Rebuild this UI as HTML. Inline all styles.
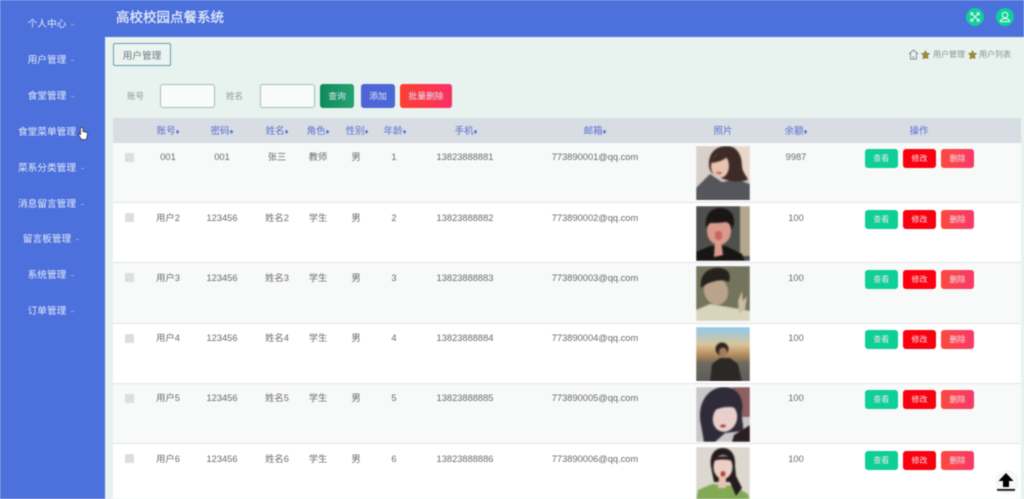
<!DOCTYPE html>
<html lang="zh"><head><meta charset="utf-8"><title>高校校园点餐系统</title>
<style>
*{box-sizing:border-box;margin:0;padding:0}
html,body{width:1024px;height:499px;overflow:hidden}
body{position:relative;background:#e8f2ee;font-family:"Liberation Sans","Noto Sans CJK SC",sans-serif;font-size:9.3px;color:#666}
#w{position:absolute;left:0;top:0;width:1024px;height:499px;overflow:hidden;filter:blur(.45px)}
.a{position:absolute;white-space:nowrap}
.side{left:0;top:0;width:105px;height:499px;background:#4c70dc}
.top{left:105px;top:0;width:919px;height:37px;background:#4c70dc}
.m{left:0;width:94px;text-align:center;color:#e4ebfb;font-size:9.700px;line-height:12px;transform:translateY(2px)}
.m i{position:absolute;width:3px;height:1px;background:#8ea6ea;top:5px}
.title{left:116px;top:9px;color:#e4eafa;font-size:13.500px;line-height:18px;font-weight:400;-webkit-text-stroke:.3px #e4eafa}
.circ{width:18px;height:18px;border-radius:50%;background:#0fcf9a;top:7.500px}
.tag{left:113px;top:43px;width:58px;height:23px;border:1.500px solid #6d9ca8;border-radius:2px;text-align:center;font-size:9.700px;line-height:25px;color:#6d7a80;background:#ebf4f0;overflow:hidden}
.lb{font-size:8.500px;color:#8c9aa0;top:91px;line-height:11px}
.ip{top:84px;width:55px;height:24px;background:#f8fbfa;border:1px solid #a9bcb8;border-radius:3px}
.bt{top:84px;height:24px;border-radius:3px;color:#dce8f5;font-size:8.800px;line-height:24px;text-align:center}
.th{left:113px;top:118px;width:908px;height:25px;background:#d7dde3}
.h{top:126px;color:#5b6fd2;font-size:9.500px;line-height:12px;transform:translateX(-50%)}
.h b{font-weight:400;font-size:7.500px;vertical-align:0}
.tb{left:113px;width:908px;height:60px;border-bottom:1px solid #e3e5e7}
.odd{background:#f8f9f9}.even{background:#fff}
.d{line-height:12px;transform:translateX(-50%);color:#6a6a6a}
.ck{left:125px;width:9px;height:9px;background:#dcdfe2}
.b{width:33px;height:19px;border-radius:3px;color:#f3e6e6;font-size:8px;line-height:19px;text-align:center}
.b1{left:865px;background:#0dcf97;width:32.500px}.b2{left:903px;background:#fb0010}.b3{left:941px;background:linear-gradient(90deg,#fb4a40,#f83a68)}
.p{left:696px;width:54px;height:54.500px;overflow:hidden}
.p svg{display:block;width:54px;height:55px;filter:blur(.9px)}
</style></head><body><div id="w">
<div class="a side"></div>
<div class="a top"></div>
<div class="a m" style="top:17px">个人中心<i style="left:71px"></i></div>
<div class="a m" style="top:53px">用户管理<i style="left:71px"></i></div>
<div class="a m" style="top:89px">食堂管理<i style="left:71px"></i></div>
<div class="a m" style="top:125px">食堂菜单管理</div>
<div class="a m" style="top:161px">菜系分类管理<i style="left:81px"></i></div>
<div class="a m" style="top:197px">消息留言管理<i style="left:81px"></i></div>
<div class="a m" style="top:232px">留言板管理<i style="left:76px"></i></div>
<div class="a m" style="top:268px">系统管理<i style="left:71px"></i></div>
<div class="a m" style="top:304px">订单管理<i style="left:71px"></i></div>
<svg class="a" style="left:78px;top:126px" width="10" height="15" viewBox="0 0 10 15"><path d="M2.500 1.500v7L1 7.500.5 9l3 4.500h5L9.500 8V6.500L5 5.500V1.500z" fill="#fff" stroke="#333" stroke-width=".8"/></svg>

<div class="a title">高校校园点餐系统</div>
<div class="a circ" style="left:966px"><svg width="18" height="18" viewBox="0 0 18 18" fill="none" stroke="#e4faf3" stroke-width="1.200"><path d="M6 6l6 6M12 6l-6 6M5 7.500V5h2.500M10.500 5H13v2.500M5 10.500V13h2.500M13 10.500V13h-2.500"/></svg></div>
<div class="a circ" style="left:996px"><svg width="18" height="18" viewBox="0 0 18 18" fill="none" stroke="#d8f7ee" stroke-width="1.200"><circle cx="9" cy="7" r="2.800"/><path d="M4.500 13.500c0-2 2-3 4.500-3s4.500 1 4.500 3z"/></svg></div>

<div class="a tag">用户管理</div>
<svg class="a" style="left:908px;top:49px" width="11" height="11" viewBox="0 0 11 11" fill="none" stroke="#7f8a88" stroke-width=".9"><path d="M1 5l4.500-4L10 5M2.500 4v6h6V4M4.500 8h2"/></svg>
<svg class="a" style="left:921px;top:50px" width="9" height="9" viewBox="0 0 10 10"><path d="M5 .5l1.400 3 3.300.4-2.400 2.200.7 3.300L5 8.700 2 10l.7-3.900L.3 3.900l3.300-.4z" fill="#a08a2e" stroke="#6e6a3c" stroke-width=".5"/></svg>
<div class="a" style="left:933px;top:49px;font-size:8px;line-height:11px;color:#8a9190">用户管理</div>
<svg class="a" style="left:968px;top:50px" width="9" height="9" viewBox="0 0 10 10"><path d="M5 .5l1.400 3 3.300.4-2.400 2.200.7 3.300L5 8.700 2 10l.7-3.900L.3 3.900l3.300-.4z" fill="#a08a2e" stroke="#6e6a3c" stroke-width=".5"/></svg>
<div class="a" style="left:979px;top:49px;font-size:8px;line-height:11px;color:#8a9190">用户列表</div>

<div class="a lb" style="left:127px">账号</div>
<div class="a ip" style="left:160px"></div>
<div class="a lb" style="left:226px">姓名</div>
<div class="a ip" style="left:260px"></div>
<div class="a bt" style="left:320px;width:34px;background:linear-gradient(90deg,#0f8a5f,#25a36e)">查询</div>
<div class="a bt" style="left:361px;width:34px;background:#4c66d8">添加</div>
<div class="a bt" style="left:400px;width:52px;background:linear-gradient(90deg,#fd3f30,#fb3064)">批量删除</div>

<div class="a th"></div>
<div class="a h" style="left:168px">账号<b>♦</b></div>
<div class="a h" style="left:222px">密码<b>♦</b></div>
<div class="a h" style="left:277px">姓名<b>♦</b></div>
<div class="a h" style="left:318px">角色<b>♦</b></div>
<div class="a h" style="left:357px">性别<b>♦</b></div>
<div class="a h" style="left:395px">年龄<b>♦</b></div>
<div class="a h" style="left:466px">手机<b>♦</b></div>
<div class="a h" style="left:595px">邮箱<b>♦</b></div>
<div class="a h" style="left:723px">照片</div>
<div class="a h" style="left:796px">余额<b>♦</b></div>
<div class="a h" style="left:919px">操作</div>

<div class="a tb odd" style="top:143px"></div>
<div class="a tb even" style="top:203px"></div>
<div class="a tb odd" style="top:263px;height:61px"></div>
<div class="a tb even" style="top:324px"></div>
<div class="a tb odd" style="top:384px"></div>
<div class="a tb even" style="top:444px;height:55px;border:0"></div>
<div class="a" style="left:1021px;top:143px;width:3px;height:356px;background:#e8f2ee"></div>

<!-- row 1 -->
<div class="a ck" style="top:153px"></div>
<div class="a d" style="left:168px;top:151px">001</div><div class="a d" style="left:222px;top:151px">001</div><div class="a d" style="left:277px;top:151px">张三</div><div class="a d" style="left:318px;top:151px">教师</div><div class="a d" style="left:356px;top:151px">男</div><div class="a d" style="left:394px;top:151px">1</div><div class="a d" style="left:465px;top:151px">13823888881</div><div class="a d" style="left:595px;top:151px">773890001@qq.com</div><div class="a d" style="left:796px;top:151px">9987</div>
<div class="a b b1" style="top:149px">查看</div><div class="a b b2" style="top:149px">修改</div><div class="a b b3" style="top:149px">删除</div>
<div class="a p" style="top:145.500px"><svg viewBox="0 0 54 55"><rect width="54" height="55" fill="#d8d0ca"/><rect x="40" width="14" height="34" fill="#ead7cb"/><path d="M0 42L14 28l12 8 14-3 14 5v17H0z" fill="#55565a"/><path d="M13 20C12 5 22 0 31 0s15 8 15 20c0 6 5 10 6 14-8 2-15 2-21 0C24 32 14 30 13 20z" fill="#3e2a26"/><ellipse cx="24" cy="20" rx="9" ry="12" fill="#e7c3b2"/><path d="M15 17c2-9 11-11 18-9-2 5-9 8-18 9z" fill="#3e2a26"/><ellipse cx="23" cy="27" rx="3" ry="1.200" fill="#c06a60"/></svg></div>

<!-- row 2 -->
<div class="a ck" style="top:213px"></div>
<div class="a d" style="left:168px;top:212px">用户2</div><div class="a d" style="left:222px;top:212px">123456</div><div class="a d" style="left:277px;top:212px">姓名2</div><div class="a d" style="left:318px;top:212px">学生</div><div class="a d" style="left:356px;top:212px">男</div><div class="a d" style="left:394px;top:212px">2</div><div class="a d" style="left:465px;top:212px">13823888882</div><div class="a d" style="left:595px;top:212px">773890002@qq.com</div><div class="a d" style="left:796px;top:212px">100</div>
<div class="a b b1" style="top:209.500px">查看</div><div class="a b b2" style="top:209.500px">修改</div><div class="a b b3" style="top:209.500px">删除</div>
<div class="a p" style="top:206px"><svg viewBox="0 0 54 55"><rect width="54" height="55" fill="#4d504c"/><rect x="44" width="10" height="50" fill="#b5a78d"/><path d="M0 55V46l14-6h16l16 8 3 7z" fill="#181614"/><ellipse cx="23" cy="25" rx="12" ry="14" fill="#d99a8c"/><path d="M10 22C8 6 18 1 26 2s13 7 12 16l-2 6c-1-5-3-7-6-8-6 1-12 1-16 1z" fill="#1a1615"/><rect x="19" y="25" width="7" height="9" rx="3" fill="#c8655f"/><path d="M19 34l6 1 2 14-9 2z" fill="#d99a8c"/></svg></div>

<!-- row 3 -->
<div class="a ck" style="top:273px"></div>
<div class="a d" style="left:168px;top:272px">用户3</div><div class="a d" style="left:222px;top:272px">123456</div><div class="a d" style="left:277px;top:272px">姓名3</div><div class="a d" style="left:318px;top:272px">学生</div><div class="a d" style="left:356px;top:272px">男</div><div class="a d" style="left:394px;top:272px">3</div><div class="a d" style="left:465px;top:272px">13823888883</div><div class="a d" style="left:595px;top:272px">773890003@qq.com</div><div class="a d" style="left:796px;top:272px">100</div>
<div class="a b b1" style="top:269.500px">查看</div><div class="a b b2" style="top:269.500px">修改</div><div class="a b b3" style="top:269.500px">删除</div>
<div class="a p" style="top:266px"><svg viewBox="0 0 54 55"><rect width="54" height="55" fill="#74735c"/><path d="M0 55V44l14-6 18 3 12 2 10 2v10z" fill="#d8d5bc"/><ellipse cx="20" cy="25" rx="12" ry="14" fill="#b9a38b" transform="rotate(-18 20 25)"/><path d="M5 22C3 6 15 1 24 2s11 7 9 14c-6-3-12-2-20 1-3 1-5 3-8 5z" fill="#25221e"/><path d="M42 35l4-10 1 10 4-5-2 14-6 3z" fill="#c9bda3"/></svg></div>

<!-- row 4 -->
<div class="a ck" style="top:333.500px"></div>
<div class="a d" style="left:168px;top:332px">用户4</div><div class="a d" style="left:222px;top:332px">123456</div><div class="a d" style="left:277px;top:332px">姓名4</div><div class="a d" style="left:318px;top:332px">学生</div><div class="a d" style="left:356px;top:332px">男</div><div class="a d" style="left:394px;top:332px">4</div><div class="a d" style="left:465px;top:332px">13823888884</div><div class="a d" style="left:595px;top:332px">773890004@qq.com</div><div class="a d" style="left:796px;top:332px">100</div>
<div class="a b b1" style="top:329.800px">查看</div><div class="a b b2" style="top:329.800px">修改</div><div class="a b b3" style="top:329.800px">删除</div>
<div class="a p" style="top:326.500px"><svg viewBox="0 0 54 55"><defs><linearGradient id="s" x1="0" y1="0" x2="0" y2="1"><stop offset="0" stop-color="#8ec9ee"/><stop offset=".32" stop-color="#d9c39a"/><stop offset=".5" stop-color="#b88d5e"/><stop offset=".65" stop-color="#6f6a5e"/><stop offset="1" stop-color="#5b5b58"/></linearGradient></defs><rect width="54" height="55" fill="url(#s)"/><path d="M14 55l2-18 8-6h10l8 6 4 18z" fill="#2b2826"/><circle cx="26" cy="22" r="6.500" fill="#2e2320"/><ellipse cx="27" cy="25" rx="4" ry="4.500" fill="#a27a60"/></svg></div>

<!-- row 5 -->
<div class="a ck" style="top:393.500px"></div>
<div class="a d" style="left:168px;top:392px">用户5</div><div class="a d" style="left:222px;top:392px">123456</div><div class="a d" style="left:277px;top:392px">姓名5</div><div class="a d" style="left:318px;top:392px">学生</div><div class="a d" style="left:356px;top:392px">男</div><div class="a d" style="left:394px;top:392px">5</div><div class="a d" style="left:465px;top:392px">13823888885</div><div class="a d" style="left:595px;top:392px">773890005@qq.com</div><div class="a d" style="left:796px;top:392px">100</div>
<div class="a b b1" style="top:390px">查看</div><div class="a b b2" style="top:390px">修改</div><div class="a b b3" style="top:390px">删除</div>
<div class="a p" style="top:387px"><svg viewBox="0 0 54 55"><rect width="54" height="55" fill="#c9c6c9"/><rect x="36" width="18" height="30" fill="#8d5f62"/><path d="M38 48l16-10v17H36z" fill="#2b1e22"/><path d="M5 38C0 14 14 0 28 0s20 12 18 24c-1 8 2 14 1 20l-18 2-10 9H8z" fill="#2f2b38"/><ellipse cx="29" cy="31" rx="12" ry="14" fill="#e8cfcb" transform="rotate(20 29 31)"/><path d="M14 26c6-4 14-8 27-5l-4-9-17 2z" fill="#2f2b38"/><ellipse cx="27" cy="39" rx="3" ry="1.500" fill="#b03e46"/></svg></div>

<!-- row 6 -->
<div class="a ck" style="top:453.500px"></div>
<div class="a d" style="left:168px;top:453px">用户6</div><div class="a d" style="left:222px;top:453px">123456</div><div class="a d" style="left:277px;top:453px">姓名6</div><div class="a d" style="left:318px;top:453px">学生</div><div class="a d" style="left:356px;top:453px">男</div><div class="a d" style="left:394px;top:453px">6</div><div class="a d" style="left:465px;top:453px">13823888886</div><div class="a d" style="left:595px;top:453px">773890006@qq.com</div><div class="a d" style="left:796px;top:453px">100</div>
<div class="a b b1" style="top:450.500px">查看</div><div class="a b b2" style="top:450.500px">修改</div><div class="a b b3" style="top:450.500px">删除</div>
<div class="a p" style="top:447px;height:52px"><svg viewBox="0 0 54 55"><rect width="54" height="55" fill="#dcd8d0"/><path d="M0 55l2-12 14-6 22 2 14 8 2 8z" fill="#82aa55"/><path d="M15 20C13 6 20 1 27 1s13 6 12 18l1 10 6 12-6 8-6-14H18z" fill="#241c1c"/><ellipse cx="27" cy="20" rx="9.500" ry="12" fill="#ecd0c6"/><path d="M17 14c3-6 16-7 20 0-6-2-14-2-20 0z" fill="#241c1c"/><ellipse cx="27" cy="27" rx="2.500" ry="3" fill="#b5403f"/><path d="M23 30l7-1v12h-8z" fill="#e8c4b8"/></svg></div>

<div class="a" style="left:995px;top:470px;width:24px;height:24px;border-radius:50%;background:#f4f6f7"></div>
<svg class="a" style="left:996px;top:472px" width="20" height="20" viewBox="0 0 20 20"><path d="M10 1L2.500 9H7v6h6V9h4.500z" fill="#000"/><rect x="1" y="17" width="18" height="1.800" fill="#111"/></svg>
</div></body></html>
